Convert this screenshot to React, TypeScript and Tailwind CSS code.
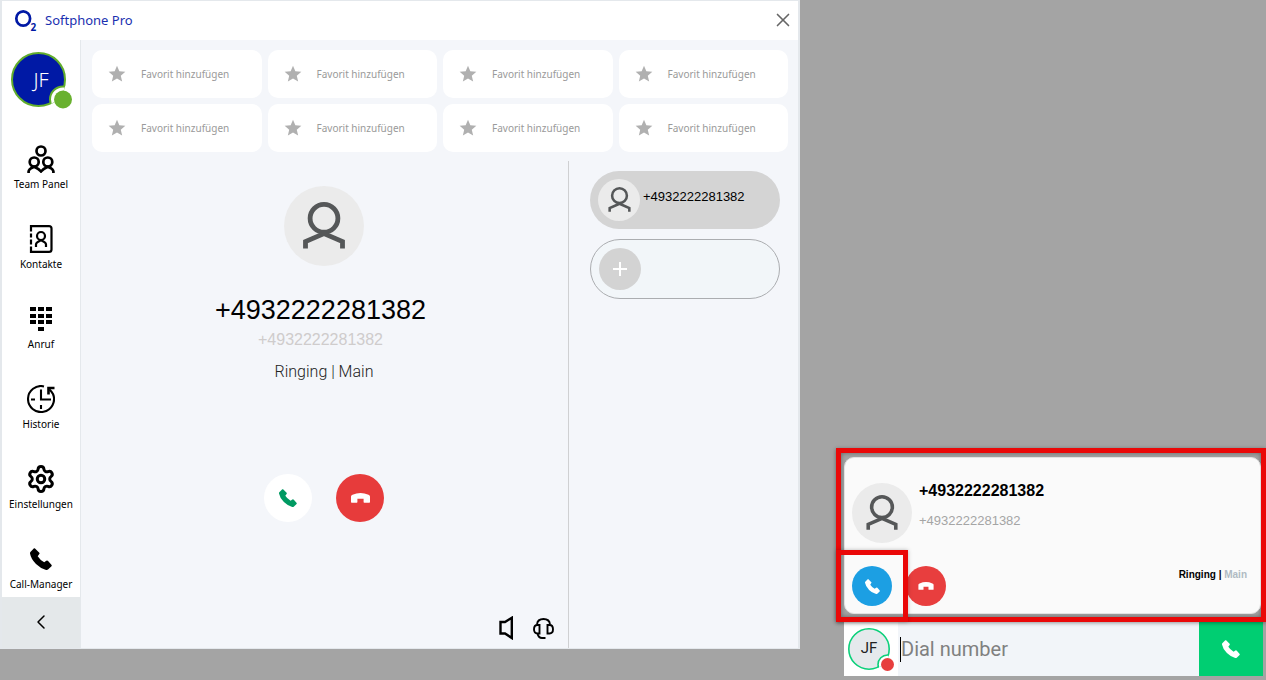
import React from 'react';
import { ChevronLeft, Settings, X } from 'lucide-react';
import { MdStar } from 'react-icons/md';
import clsx from 'clsx';

const PHONE_NUMBER = '+4932222281382';

type IconProps = {
  className?: string;
};

const PhoneIcon: React.FC<IconProps> = ({ className }) => (
  <svg className={className} viewBox="0 0 22 22" fill="currentColor" aria-hidden="true">
    <path d="M4 .3Q4.500 0 5 .4L9.300 4.700Q9.800 5.400 9.300 6L7.700 8.300Q10 12 14.200 14.300L16.300 12.800Q17.300 12.200 18.100 13L21.600 17Q22 17.600 21.500 18.200L18 21.600Q17 22.200 15.500 21.700Q10.500 20.400 6 16Q1 11 0 5.500Q-.1 4.600 .4 4Z" />
  </svg>
);

const HangUpIcon: React.FC<IconProps> = ({ className }) => (
  <svg className={className} viewBox="0 0 19 10" fill="currentColor" aria-hidden="true">
    <path d="M0 9V3.500Q0 2.500 1.500 1.800Q9.500-1.600 17.500 1.800Q19 2.500 19 3.500V9Q19 9.700 18.300 9.700H13.200Q12.600 9.700 12.600 9V5.800H6.400V9Q6.400 9.700 5.800 9.700H.7Q0 9.700 0 9Z" />
  </svg>
);

const PersonIcon: React.FC<IconProps> = ({ className }) => (
  <svg className={className} viewBox="0 0 42 47" fill="none" stroke="currentColor" strokeWidth="4.8" aria-hidden="true">
    <circle cx="21" cy="16.300" r="13.900" />
    <path d="M2.500 46.500V39.500L21 31.500L39.500 39.500V46.500" />
  </svg>
);

const TeamIcon: React.FC<IconProps> = ({ className }) => (
  <svg className={className} viewBox="0 0 28 28" fill="none" stroke="currentColor" strokeWidth="2.7" aria-hidden="true">
    <circle cx="14" cy="6" r="4.500" />
    <circle cx="7.200" cy="17" r="4.500" />
    <circle cx="20.800" cy="17" r="4.500" />
    <path d="M1.600 28V26.500Q1.600 24 7.200 21.700Q11.500 23.500 14 26.500Q16.500 23.500 20.800 21.700Q26.400 24 26.400 26.500V28" />
  </svg>
);

const ContactsIcon: React.FC<IconProps> = ({ className }) => (
  <svg className={className} viewBox="0 0 28 28" fill="none" stroke="currentColor" strokeWidth="2.2" aria-hidden="true">
    <path d="M4 6.500V1.100H22Q24.500 1.100 24.500 3.500V24.500Q24.500 26.900 22 26.900H4V21.500M4 8.500V12.500M4 14.500V19.500" />
    <circle cx="14" cy="11" r="4" />
    <path d="M9 22V19.500Q9 17.500 14 15.300Q19 17.500 19 19.500V22" />
  </svg>
);

const KeypadIcon: React.FC<IconProps> = ({ className }) => (
  <svg className={className} viewBox="0 0 28 28" fill="currentColor" aria-hidden="true">
    {[2, 9, 15].map(y => [3, 11, 19].map(x => <rect key={`${x}-${y}`} x={x} y={y} width="6" height="4" />))}
    <rect x="11" y="22" width="6" height="4" />
  </svg>
);

const HistoryIcon: React.FC<IconProps> = ({ className }) => (
  <svg className={className} viewBox="0 0 28 28" fill="none" stroke="currentColor" strokeWidth="2.1" aria-hidden="true">
    <path d="M17 1.400A13 13 0 1 0 26 9Q25 7 22.500 4.500" />
    <path d="M14 4.500V14.500H24M4 14.500H8M14 20V24" />
    <path d="M21.500 9.500V3H27.500" strokeWidth="2.6" />
  </svg>
);

const SpeakerIcon: React.FC<IconProps> = ({ className }) => (
  <svg className={className} viewBox="0 0 15 24" fill="none" stroke="currentColor" strokeWidth="2.4" aria-hidden="true">
    <path d="M1.500 6H6L12.800 1.800V22L6 17.500H1.500Z" />
  </svg>
);

const HeadsetIcon: React.FC<IconProps> = ({ className }) => (
  <svg className={className} viewBox="0 0 21 21" fill="none" stroke="currentColor" strokeWidth="1.9" aria-hidden="true">
    <path d="M4 6.500Q4.500 1 10.500 1Q16.500 1 17 6.500" />
    <path d="M6.500 7V15.500H4.500Q1 15.500 1 11.300Q1 7 4.500 7Z" />
    <path d="M14.500 7V15.500H16.500Q20 15.500 20 11.300Q20 7 16.500 7Z" />
    <path d="M4.500 15.500Q5.500 20 9 20H12.500" />
  </svg>
);

const LogoIcon: React.FC<IconProps> = ({ className }) => (
  <svg className={className} viewBox="0 0 24 24" aria-hidden="true">
    <ellipse cx="9.200" cy="9.500" rx="6.900" ry="7.200" fill="none" stroke="#0019a5" strokeWidth="2.7" />
    <text x="16.500" y="21.500" fontSize="10" fontWeight="700" fontFamily="Open Sans, sans-serif" fill="#0019a5">
      2
    </text>
  </svg>
);

const navItems = [
  { label: 'Team Panel', icon: TeamIcon, size: 'size-7' },
  { label: 'Kontakte', icon: ContactsIcon, size: 'size-7' },
  { label: 'Anruf', icon: KeypadIcon, size: 'size-7' },
  { label: 'Historie', icon: HistoryIcon, size: 'size-7' },
  { label: 'Einstellungen', icon: Settings, size: 'size-[30px] stroke-[2.4]' },
  { label: 'Call-Manager', icon: PhoneIcon, size: 'size-[22px]' }
];

const Sidebar = () => (
  <aside className="flex w-[79px] shrink-0 flex-col border-r border-[#e4e8ec] bg-white">
    <div className="h-[77px] pt-3 pl-[9px]">
      <div className="relative size-[62px]">
        <svg className="size-full" viewBox="0 0 62 62" aria-hidden="true">
          <clipPath id="user-clip">
            <circle cx="27.500" cy="27.500" r="27.500" />
          </clipPath>
          <circle cx="27.500" cy="27.500" r="26.500" fill="#0019a5" stroke="#61ad2c" strokeWidth="2" />
          <circle cx="52" cy="47.500" r="13" fill="#fff" stroke="#61ad2c" strokeWidth="2" clipPath="url(#user-clip)" />
          <circle cx="52" cy="47.500" r="9" fill="#69b12f" />
        </svg>
        <span className="absolute inset-0 flex items-center justify-center pr-0.5 pb-1.5 text-xl font-light text-white">JF</span>
      </div>
    </div>

    <nav className="flex flex-1 flex-col">
      {navItems.map(({ label, icon: Icon, size }) => (
        <button key={label} type="button" className="flex h-20 flex-col items-center gap-1 pt-7 text-black">
          <span className="flex size-7 items-center justify-center">
            <Icon className={clsx('shrink-0', size)} />
          </span>
          <span className="text-[10px] leading-[14px] whitespace-nowrap">{label}</span>
        </button>
      ))}
    </nav>

    <button type="button" aria-label="Einklappen" className="flex h-[51px] items-center justify-center bg-[#e4e8ea] pb-0.5">
      <ChevronLeft className="size-6" strokeWidth={1.5} />
    </button>
  </aside>
);

const Favorites = () => (
  <div className="grid grid-cols-4 gap-1.5 pt-2.5 pr-2.5 pl-[11px]">
    {Array.from({ length: 8 }, (_, i) => (
      <button key={i} type="button" className="flex h-12 items-center gap-[14px] rounded-[10px] bg-white pl-[15px] text-[10px] text-[#9a9a9a]">
        <MdStar className="size-5 shrink-0 text-[#b0b0b0]" />
        <span className="whitespace-nowrap">Favorit hinzufügen</span>
      </button>
    ))}
  </div>
);

type AvatarProps = {
  className: string;
  iconClassName: string;
};

const Avatar: React.FC<AvatarProps> = ({ className, iconClassName }) => (
  <span className={clsx('flex shrink-0 items-center justify-center rounded-full bg-[#ebebeb] pb-0.5 text-[#555758]', className)}>
    <PersonIcon className={iconClassName} />
  </span>
);

const CallView = () => (
  <section className="flex min-w-0 flex-1 flex-col">
    <div className="flex flex-col items-center pt-[25px] pr-px">
      <Avatar className="size-20" iconClassName="h-[47px] w-[42px]" />
      <h1 className="mt-[26px] pr-[7px] font-['Liberation_Sans',sans-serif] text-[27px] leading-9 text-black">{PHONE_NUMBER}</h1>
      <p className="pr-[7px] font-['Liberation_Sans',sans-serif] text-base leading-6 text-[#cfcccc]">{PHONE_NUMBER}</p>
      <p className="mt-2 font-[Roboto,sans-serif] text-base leading-6 font-light text-[#222]">Ringing | Main</p>
      <div className="mt-[90px] flex gap-6">
        <button type="button" aria-label="Annehmen" className="flex size-12 items-center justify-center rounded-full bg-white text-[#009a62]">
          <PhoneIcon className="size-[18px]" />
        </button>
        <button type="button" aria-label="Auflegen" className="flex size-12 items-center justify-center rounded-full bg-[#e73b3b] text-white">
          <HangUpIcon className="h-2.5 w-[19px]" />
        </button>
      </div>
    </div>

    <div className="mt-auto flex items-center justify-end gap-[19px] pr-3.5 pb-2">
      <button type="button" aria-label="Lautsprecher">
        <SpeakerIcon className="h-6 w-[15px]" />
      </button>
      <button type="button" aria-label="Headset">
        <HeadsetIcon className="size-[21px]" />
      </button>
    </div>
  </section>
);

const CallList = () => (
  <section className="flex w-[230px] shrink-0 flex-col gap-2.5 border-l border-[#cfd0d2] pt-2.5 pr-[18px] pl-[21px]">
    <button type="button" className="flex h-[58px] items-center gap-[3px] rounded-full bg-[#d4d4d4] pl-2">
      <Avatar className="size-[42px]" iconClassName="h-[25px] w-[23px]" />
      <span className="pb-1.5 font-['Liberation_Sans',sans-serif] text-[13px] text-black">{PHONE_NUMBER}</span>
    </button>
    <button type="button" aria-label="Anruf hinzufügen" className="flex h-[60px] items-center rounded-full border border-[#abadb0] bg-[#f2f6f9] pl-2">
      <span className="flex size-[42px] items-center justify-center rounded-full bg-[#d3d3d3]">
        <svg className="size-3.5" viewBox="0 0 14 14" stroke="#fff" strokeWidth="2" aria-hidden="true">
          <path d="M7 0V14M0 7H14" />
        </svg>
      </span>
    </button>
  </section>
);

const SoftphoneWindow = () => (
  <div className="mb-[31px] flex min-w-0 flex-1 flex-col border-x-2 border-t border-b border-[#e4e8ec] bg-[#f4f6fa]">
    <header className="flex h-[39px] items-center bg-white pr-1 pl-3">
      <LogoIcon className="size-6" />
      <span className="ml-[7px] text-[13px] text-[#1a30b0]">Softphone Pro</span>
      <button type="button" aria-label="Schließen" className="ml-auto pb-0.5 text-[#666]">
        <X className="size-[22px]" strokeWidth={1.8} />
      </button>
    </header>
    <div className="flex flex-1">
      <Sidebar />
      <main className="flex min-w-0 flex-1 flex-col">
        <Favorites />
        <div className="mt-[9px] flex flex-1">
          <CallView />
          <CallList />
        </div>
      </main>
    </div>
  </div>
);

const IncomingCall = () => (
  <div className="relative border-[5px] border-[#ea0808] pt-1 pb-[3px] pl-[3px] shadow-[0_1px_4px_#0006,inset_0_0_5px_#0006]">
    <div className="flex h-[157px] flex-col justify-between rounded-[10px] border border-[#e2e2e2] bg-[#fafafa] px-[7px] pb-[7px] pt-[25px] font-['Liberation_Sans',sans-serif]">
      <div className="flex gap-[7px]">
        <Avatar className="size-[60px]" iconClassName="h-[35px] w-[32px]" />
        <div>
          <p className="text-base leading-4 font-bold text-black">{PHONE_NUMBER}</p>
          <p className="mt-3.5 text-[13px] leading-4 text-[#a5a5a5]">{PHONE_NUMBER}</p>
        </div>
      </div>
      <div className="flex items-start gap-[14px]">
        <button type="button" aria-label="Annehmen" className="flex size-10 items-center justify-center rounded-full bg-[#1c9fe3] text-white">
          <PhoneIcon className="size-[15px]" />
        </button>
        <button type="button" aria-label="Auflegen" className="flex size-10 items-center justify-center rounded-full bg-[#e83e3e] text-white">
          <HangUpIcon className="h-2 w-4" />
        </button>
        <p className="ml-auto pt-0.5 pr-1.5 text-[10px] leading-[14px] font-bold text-black">
          Ringing | <span className="text-[#b0bac3]">Main</span>
        </p>
      </div>
    </div>
    {/* Highlight around the answer button */}
    <div className="pointer-events-none absolute -bottom-[5px] -left-[5px] size-[72px] border-[5px] border-[#ea0808] shadow-[0_0_4px_#0004]" />
  </div>
);

const DialBar = () => (
  <div className="mr-[3px] ml-2 flex h-[54px] font-[Roboto,sans-serif]">
    <div className="w-[54px] shrink-0 bg-white pt-1.5 pl-1">
      <div className="relative size-[46px]">
        <svg className="size-full" viewBox="0 0 46 46" aria-hidden="true">
          <clipPath id="dial-clip">
            <circle cx="21" cy="21" r="21" />
          </clipPath>
          <circle cx="21" cy="21" r="20.200" fill="#e5e9ec" stroke="#0bd07a" strokeWidth="1.6" />
          <circle cx="39.500" cy="36.500" r="9.500" fill="#fff" stroke="#0bd07a" strokeWidth="1.6" clipPath="url(#dial-clip)" />
          <circle cx="39.500" cy="36.500" r="6.500" fill="#e73e3e" />
        </svg>
        <span className="absolute inset-0 flex items-center justify-center pr-1 pb-1.5 text-[15px] text-[#222]">JF</span>
      </div>
    </div>
    <label className="flex min-w-0 flex-1 items-center bg-[#f2f5f9] pl-0.5">
      <span className="h-[25px] w-px bg-black" />
      <input
        type="text"
        aria-label="Dial number"
        placeholder="Dial number"
        className="w-full min-w-0 bg-transparent text-xl text-black outline-none placeholder:text-[#808080]"
      />
    </label>
    <button type="button" aria-label="Anrufen" className="flex w-16 shrink-0 items-center justify-center bg-[#00ce72] text-white">
      <PhoneIcon className="size-[18px]" />
    </button>
  </div>
);

const App = () => (
  <div className="flex min-h-screen gap-9 bg-[#a4a4a4] font-['Noto_Sans',sans-serif]">
    <SoftphoneWindow />
    <div className="mt-auto w-[430px] shrink-0 pb-1">
      <IncomingCall />
      <DialBar />
    </div>
  </div>
);

export default App;
